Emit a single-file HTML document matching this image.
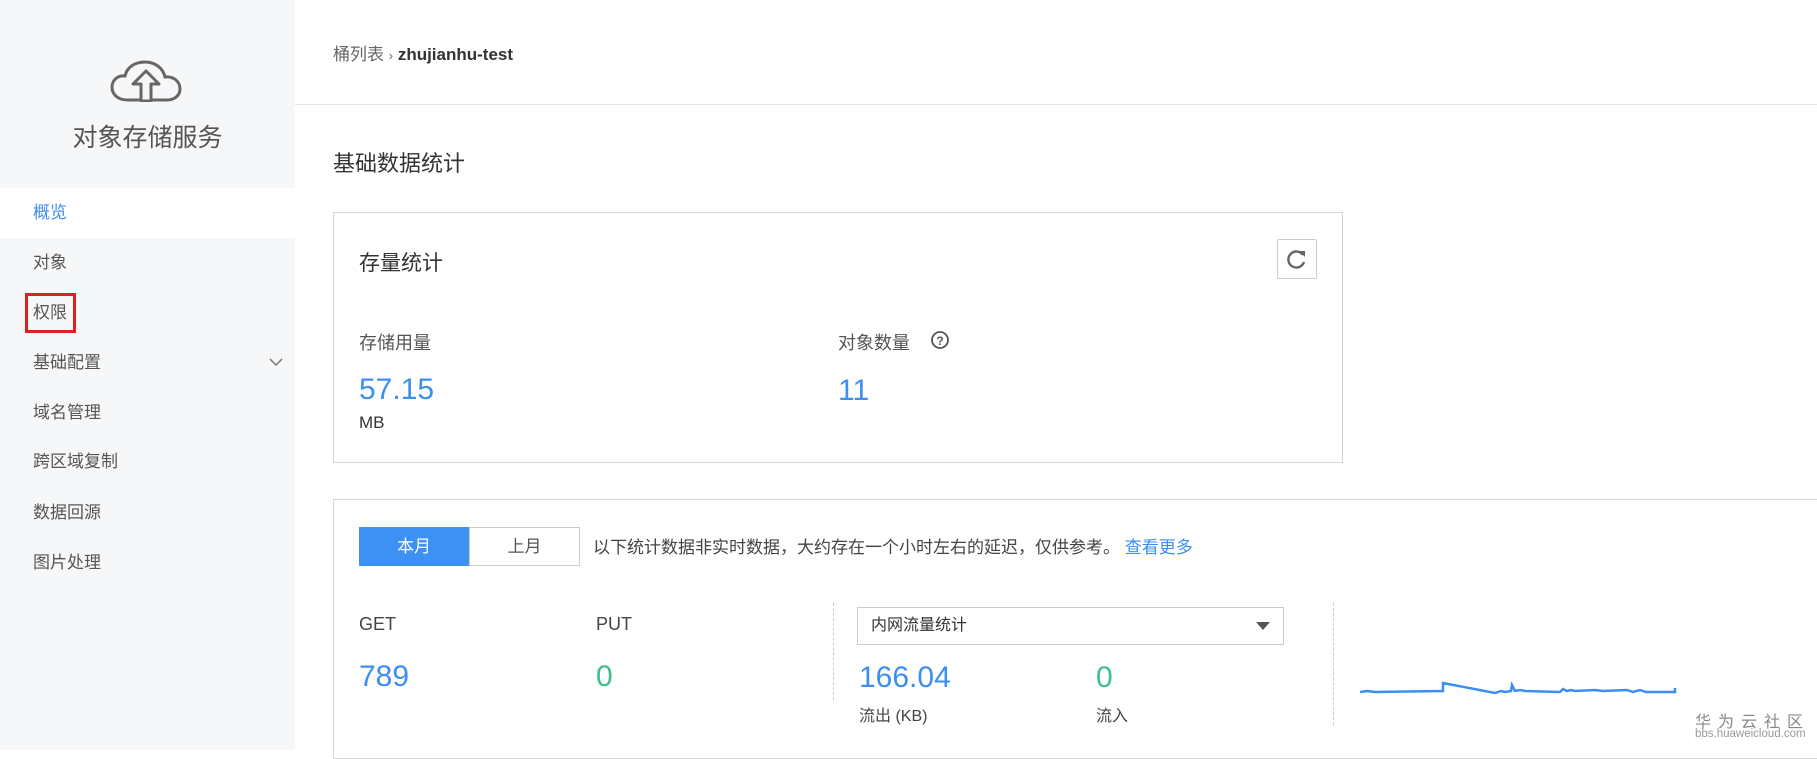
<!DOCTYPE html>
<html><head><meta charset="utf-8"><style>
*{margin:0;padding:0;box-sizing:border-box}
body{width:1817px;height:750px;overflow:hidden;background:#fff;font-family:"Liberation Sans","Noto Sans CJK SC",sans-serif;color:#333;position:relative}
.a{position:absolute;white-space:nowrap}
#side{position:absolute;left:0;top:0;width:295px;height:750px;background:#f6f7f8}
.it{position:absolute;left:33px;font-size:17px;color:#555;line-height:20px}
.blue{color:#3c8ef0}
.num{font-size:30px;line-height:34px}
.green{color:#3fbf8a}
</style></head><body>
<div id="side">
<svg class="a" style="left:110px;top:60px" width="72" height="42" viewBox="0 0 72 42"><path d="M18 40 C6 40 2 33 2 27 C2 20 8 15 15 16 C17 7 25 2 35 2 C45 2 53 8 55 17 C63 16 70 21 70 29 C70 35 65 40 57 40 Z" fill="none" stroke="#666" stroke-width="3"/><path d="M36 11 L23 24 L31 24 L31 41 L41 41 L41 24 L49 24 Z" fill="#f6f7f8" stroke="#666" stroke-width="3" stroke-linejoin="round"/></svg>
<div class="a" style="left:0;width:295px;text-align:center;top:118px;font-size:25px;color:#555">对象存储服务</div>
<div class="a" style="left:0;top:188px;width:295px;height:50px;background:#fff"></div>
<div class="it blue" style="top:203px">概览</div>
<div class="it" style="top:253px">对象</div>
<div class="it" style="top:303px">权限</div>
<div class="a" style="left:25px;top:293px;width:51px;height:40px;border:3px solid #e02020"></div>
<div class="it" style="top:353px">基础配置</div>
<svg class="a" style="left:269px;top:358px" width="14" height="9"><path d="M1 1 L7 7 L13 1" fill="none" stroke="#777" stroke-width="1.5"/></svg>
<div class="it" style="top:403px">域名管理</div>
<div class="it" style="top:452px">跨区域复制</div>
<div class="it" style="top:503px">数据回源</div>
<div class="it" style="top:553px">图片处理</div>
</div>
<div class="a" style="left:333px;top:40px;font-size:17px;color:#666">桶列表 <span style="font-size:13px">›</span> <b style="color:#333">zhujianhu-test</b></div>
<div class="a" style="left:295px;top:104px;width:1522px;height:1px;background:#e4e4e4"></div>
<div class="a" style="left:333px;top:146px;font-size:22px">基础数据统计</div>
<div class="a" style="left:333px;top:212px;width:1010px;height:251px;border:1px solid #d5d5d5"></div>
<div class="a" style="left:359px;top:247px;font-size:21px">存量统计</div>
<div class="a" style="left:1277px;top:239px;width:40px;height:40px;border:1px solid #ccc;border-radius:2px"></div>
<svg class="a" style="left:1286px;top:248px" width="22" height="22" viewBox="0 0 22 22"><path d="M17 7 A8 8 0 1 0 18 14" fill="none" stroke="#666" stroke-width="2.4"/><path d="M13 3 L19 3 L19 9 Z" fill="#666"/></svg>
<div class="a" style="left:359px;top:329px;font-size:18px;color:#555">存储用量</div>
<div class="a num blue" style="left:359px;top:373px">57.15</div>
<div class="a" style="left:359px;top:413px;font-size:17px">MB</div>
<div class="a" style="left:838px;top:329px;font-size:18px;color:#555">对象数量</div>
<svg class="a" style="left:930px;top:330px" width="20" height="20"><circle cx="10" cy="10" r="8" fill="none" stroke="#555" stroke-width="1.8"/><text x="10" y="15" font-size="12" text-anchor="middle" font-weight="bold" fill="#555" font-family="Liberation Sans">?</text></svg>
<div class="a num blue" style="left:838px;top:374px">11</div>
<div class="a" style="left:333px;top:499px;width:1500px;height:260px;border:1px solid #d5d5d5"></div>
<div class="a" style="left:359px;top:527px;width:110px;height:39px;background:#3c91f2;color:#fff;font-size:17px;text-align:center;line-height:39px">本月</div>
<div class="a" style="left:469px;top:527px;width:111px;height:39px;border:1px solid #ccc;color:#555;font-size:17px;text-align:center;line-height:37px">上月</div>
<div class="a" style="left:593px;top:533px;font-size:17px;color:#444">以下统计数据非实时数据，大约存在一个小时左右的延迟，仅供参考。 <span class="blue">查看更多</span></div>
<div class="a" style="left:359px;top:614px;font-size:18px;color:#444">GET</div>
<div class="a num blue" style="left:359px;top:660px">789</div>
<div class="a" style="left:596px;top:614px;font-size:18px;color:#444">PUT</div>
<div class="a num green" style="left:596px;top:660px">0</div>
<div class="a" style="left:833px;top:603px;height:97px;border-left:1px dashed #ccc"></div>
<div class="a" style="left:1333px;top:603px;height:122px;border-left:1px dashed #ccc"></div>
<div class="a" style="left:857px;top:607px;width:427px;height:38px;border:1px solid #ccc;font-size:16px;line-height:36px;padding-left:13px">内网流量统计</div>
<svg class="a" style="left:1256px;top:622px" width="14" height="9"><path d="M0 0 L14 0 L7 8 Z" fill="#555"/></svg>
<div class="a num blue" style="left:859px;top:661px">166.04</div>
<div class="a" style="left:859px;top:702px;font-size:16px;color:#444">流出 (KB)</div>
<div class="a num green" style="left:1096px;top:661px">0</div>
<div class="a" style="left:1096px;top:702px;font-size:16px;color:#444">流入</div>
<svg class="a" style="left:1355px;top:675px" width="330" height="25"><polyline points="5,17 12,16 20,17 88,16 88,8 140,18 146,16 150,17 156,16 157,10 160,16 165,15 170,16 205,17 208,14 212,16 216,15 220,16 240,15 248,16 272,15 278,17 285,15 291,17 320,17 320,13" fill="none" stroke="#3c8ef0" stroke-width="2.5"/></svg>
<div class="a" style="left:1695px;top:708px;font-size:16px;color:#888;letter-spacing:7px">华为云社区</div>
<div class="a" style="left:1695px;top:728px;font-size:11.5px;color:#999">bbs.huaweicloud.com</div>
</body></html>
